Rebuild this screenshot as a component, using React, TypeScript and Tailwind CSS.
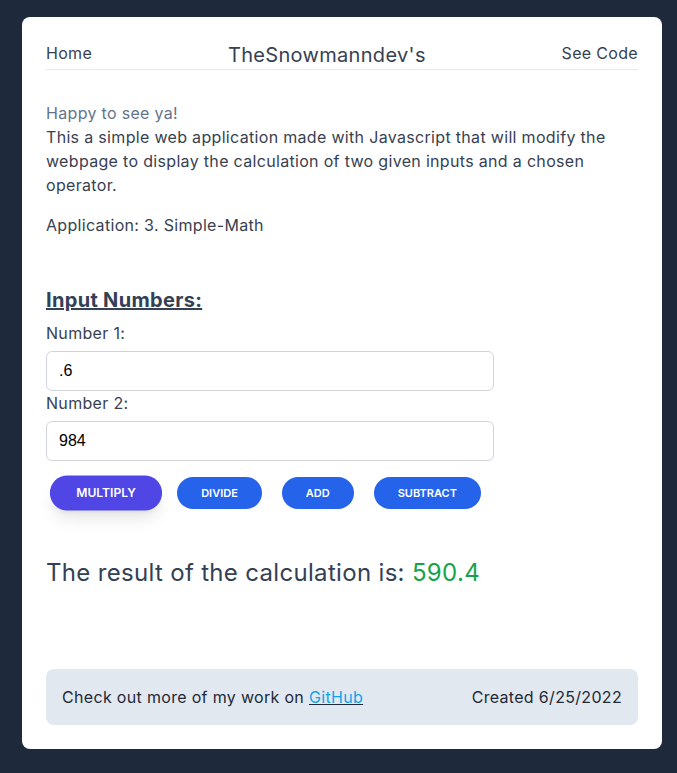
export default function App() {
  return (
    <div
      className="min-h-screen bg-[#1e293b] px-[22px] pt-[17px] pb-6 tracking-[0.02em]"
      style={{ fontFamily: "Inter, 'Noto Sans', sans-serif" }}
    >
      <div className="w-[640px] rounded-lg bg-white p-6">
        <header className="flex justify-between border-b border-gray-200 text-[#374151]">
          <a className="text-base">Home</a>
          <h1 className="text-xl">TheSnowmanndev's</h1>
          <a className="text-base">See Code</a>
        </header>

        <section className="mt-[31px] text-base text-[#374151]">
          <p>
            <span className="text-[#64748b]">Happy to see ya!</span>
            <br />
            This a simple web application made with Javascript that will modify the webpage to display the
            calculation of two given inputs and a chosen operator.
          </p>
          <p className="mt-4">Application: 3. Simple-Math</p>
        </section>

        <section className="mt-[49px]">
          <h2 className="mb-[7px] text-xl font-bold text-[#334155] underline">Input Numbers:</h2>
          <label className="block text-[#374151]">Number 1:</label>
          <input
            defaultValue=".6"
            className="mt-1.5 block h-10 w-full max-w-md rounded-md border border-[#d1d5db] px-3 text-base tracking-normal text-black"
            style={{ fontFamily: "'Liberation Sans', Arial, sans-serif" }}
          />
          <label className="block text-[#374151]">Number 2:</label>
          <input
            defaultValue="984"
            className="mt-1.5 block h-10 w-full max-w-md rounded-md border border-[#d1d5db] px-3 text-base tracking-normal text-black"
            style={{ fontFamily: "'Liberation Sans', Arial, sans-serif" }}
          />
          <div className="mt-4 ml-[9px] flex gap-5 tracking-normal">
            <button className="scale-110 rounded-full bg-[#4f46e5] px-6 py-2 text-[11px] leading-4 font-semibold text-white shadow-lg">
              MULTIPLY
            </button>
            <button className="rounded-full bg-[#2563eb] px-6 py-2 text-[11px] leading-4 font-semibold text-white">
              DIVIDE
            </button>
            <button className="rounded-full bg-[#2563eb] px-6 py-2 text-[11px] leading-4 font-semibold text-white">
              ADD
            </button>
            <button className="rounded-full bg-[#2563eb] px-6 py-2 text-[11px] leading-4 font-semibold text-white">
              SUBTRACT
            </button>
          </div>
        </section>

        <p className="mt-12 text-2xl text-[#334155]">
          The result of the calculation is: <span className="text-[#16a34a]">590.4</span>
        </p>

        <footer className="mt-[80px] flex justify-between rounded-lg bg-[#e2e8f0] px-4 py-4 text-base text-[#1f2937]">
          <p>
            Check out more of my work on{" "}
            <a className="text-[#0ea5e9] underline decoration-[#1f2937]">GitHub</a>
          </p>
          <p>Created 6/25/2022</p>
        </footer>
      </div>
    </div>
  );
}
